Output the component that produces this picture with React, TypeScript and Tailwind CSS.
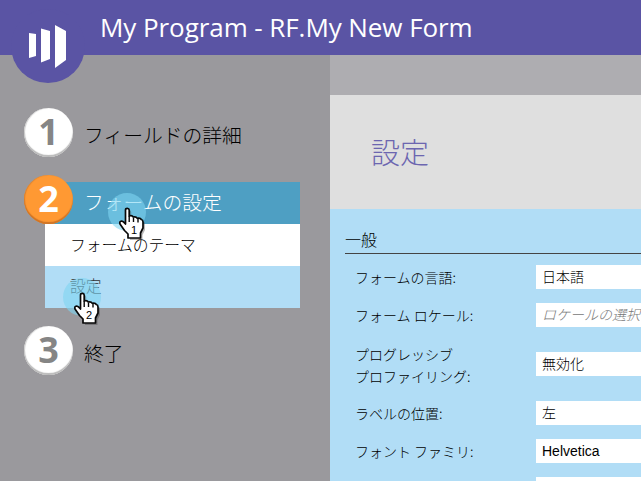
import React from "react";

const jp = "font-['Noto_Sans_CJK_JP',sans-serif] font-light";

function Hand({ n, className }: { n: string; className: string }) {
  return (
    <div className={`pointer-events-none absolute z-20 h-[50px] w-[44px] ${className}`}>
      <div className="absolute left-0 top-0 size-[38px] rounded-full bg-[#7fd5f2]/60" />
      <svg className="absolute left-[10px] top-[14px]" width="30" height="36" viewBox="0 0 30 36">
        <path
          d="M7.500 3q0-1.700 1.800-1.700T11.200 3v6q2.800-1 4.100 1 2.800-.8 4 1.300 2.900-.8 4 1.200 1.700.3 1.700 2.500v6L22.500 26v5H10v-4L6.500 23.500 2 17q-.8-2.800 1.500-3 1.500 0 4 3z"
          fill="#333"
          opacity=".35"
          transform="translate(2 2)"
        />
        <path
          d="M7.500 3q0-1.700 1.800-1.700T11.200 3v6q2.800-1 4.100 1 2.800-.8 4 1.300 2.900-.8 4 1.200 1.700.3 1.700 2.500v6L22.500 26v5H10v-4L6.500 23.500 2 17q-.8-2.800 1.500-3 1.500 0 4 3z"
          fill="#fff"
          stroke="#080808"
          strokeWidth="1.700"
          strokeLinejoin="round"
        />
        <path d="M11.200 9v6M15.500 10.500v4.500M20 12v3.500" stroke="#080808" strokeWidth="1.400" />
      </svg>
      <span className="absolute left-[20px] top-[31px] w-[12px] text-center font-['Liberation_Sans',sans-serif] text-[11px] font-normal leading-[12px] text-black">
        {n}
      </span>
    </div>
  );
}

function Step({ n, active = false }: { n: string; active?: boolean }) {
  return (
    <div
      className={`relative z-10 flex size-[49px] shrink-0 items-center justify-center rounded-full pb-[2px] font-['Open_Sans',sans-serif] text-[36px] font-bold leading-none ${
        active
          ? "bg-[#ff9933] text-white shadow-[inset_0_-2px_1px_#cf7426,inset_1px_0_1px_#d98232]"
          : "bg-white text-[#858585] shadow-[inset_0_-2px_1px_#b9b9b9,inset_1px_0_1px_#cccccc]"
      }`}
    >
      {n}
    </div>
  );
}

type FieldProps = { label: React.ReactNode; value: string; kind?: string; tall?: boolean };

function Field({ label, value, kind = "", tall = false }: FieldProps) {
  return (
    <div className={`mb-[14px] flex shrink-0 items-center pl-[25px] ${tall ? "h-[46px]" : "h-6"}`}>
      <div className={`w-[181px] shrink-0 text-[14px] leading-[22px] text-black ${tall ? "mt-px" : ""}`}>
        {label}
      </div>
      <div
        className={`h-6 flex-1 whitespace-nowrap bg-white pl-[6px] text-[14px] leading-[23px] text-black ${kind}`}
      >
        {value}
      </div>
    </div>
  );
}

export default function App() {
  return (
    <div className={`flex h-[481px] w-[641px] flex-col overflow-hidden bg-[#9a999d] ${jp}`}>
      <header className="relative flex h-[55px] shrink-0 bg-[#5a54a4] pl-[100px]">
        <div className="absolute left-[11px] top-[9px] size-[74px] rounded-full bg-[#5a54a4]" />
        <svg className="absolute left-[29px] top-[24px]" width="38" height="45" viewBox="0 0 38 45" fill="#fff">
          <path d="M0 9l7 1v22l-7 2zM12 4.500l9 2.500v28l-9 3.500zM26 1l11 6v29l-11 8z" />
        </svg>
        <h1 className="whitespace-nowrap font-['Open_Sans',sans-serif] text-[26px] font-normal leading-[55px] tracking-[-0.07px] text-white">
          My Program - RF.My New Form
        </h1>
      </header>
      <div className="flex min-h-0 flex-1">
        <nav className="w-[330px] shrink-0 pt-[53px]">
          <div className="flex h-[49px] pl-6">
            <Step n="1" />
            <span className="ml-[11px] mt-[12px] text-[19.800px] leading-[30px] text-black">フィールドの詳細</span>
          </div>
          <div className="relative mt-[18px] flex h-[49px] pl-6">
            <Step n="2" active />
            <div className="-ml-[28px] mt-[7px] h-[42px] w-[255px] bg-[#4e9fc3] pl-[39px] text-[19.800px] leading-[40px] text-white">
              フォームの設定
            </div>
            <Hand n="1" className="left-[108px] top-[18px]" />
          </div>
          <div className="ml-[45px] w-[255px] text-[15.800px] text-black">
            <div className="h-[42px] bg-white pl-[25px] leading-[41px]">フォームのテーマ</div>
            <div className="relative h-[42px] bg-[#b1ddf6] pl-[25px] leading-[40px] text-[#333]">
              設定
              <Hand n="2" className="left-[18px] top-[12px]" />
            </div>
          </div>
          <div className="mt-[18px] flex h-[49px] pl-6">
            <Step n="3" />
            <span className="ml-[11px] mt-[12px] text-[19.800px] leading-[30px] text-black">終了</span>
          </div>
        </nav>
        <main className="flex min-w-0 flex-1 flex-col">
          <div className="h-10 shrink-0 bg-[#aeadb1]" />
          <div className="h-[114px] shrink-0 bg-[#dfdfdf] pl-[41px] text-[29px] leading-[112px] text-[#6c66b0]">
            設定
          </div>
          <section className="flex min-h-0 flex-1 flex-col overflow-hidden bg-[#b1ddf6]">
            <h2 className="ml-[15px] mt-[17px] h-[28px] shrink-0 border-b border-[#444] text-[16px] font-light leading-[26px] text-black">
              一般
            </h2>
            <div className="flex shrink-0 flex-col pt-[11px]">
              <Field label="フォームの言語:" value="日本語" />
              <Field label="フォーム ロケール:" value="ロケールの選択" kind="italic !text-[#777]" />
              <Field
                tall
                label={
                  <>
                    プログレッシブ
                    <br />
                    プロファイリング:
                  </>
                }
                value="無効化"
              />
              <Field label="ラベルの位置:" value="左" />
              <Field
                label="フォント ファミリ:"
                value="Helvetica"
                kind="font-['Liberation_Sans',sans-serif] font-normal !leading-6"
              />
              <Field label="" value="" />
            </div>
          </section>
        </main>
      </div>
    </div>
  );
}
